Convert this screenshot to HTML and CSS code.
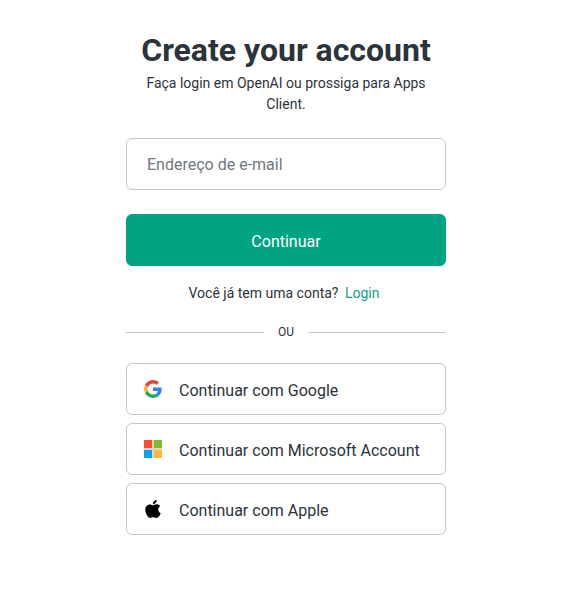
FILE: index.html
```html
<!DOCTYPE html>
<html lang="pt-BR">
<head>
<meta charset="utf-8">
<meta name="viewport" content="width=device-width, initial-scale=1">
<title>Create your account</title>
<link rel="stylesheet" href="styles.css">
</head>
<body>
<main class="signup">
  <header class="intro">
    <h1 class="title">Create your account</h1>
    <p class="subtitle">Faça login em OpenAI ou prossiga para Apps Client.</p>
  </header>
  <form class="email-form">
    <input class="email-input" type="email" placeholder="Endereço de e-mail" aria-label="Endereço de e-mail">
    <button class="submit" type="submit">Continuar</button>
  </form>
  <p class="login-prompt">Você já tem uma conta? <a class="login-link" href="#">Login</a></p>
  <div class="divider"><span>OU</span></div>
  <div class="providers">
    <button class="provider" type="button">
      <svg class="icon" viewBox="0 0 48 48" aria-hidden="true">
        <path fill="#EA4335" d="M24 9.5c3.54 0 6.71 1.22 9.21 3.6l6.85-6.85C35.9 2.38 30.47 0 24 0 14.62 0 6.51 5.38 2.56 13.22l7.98 6.19C12.43 13.72 17.74 9.5 24 9.5z"/>
        <path fill="#2f85ee" d="M46.98 24.55c0-1.57-.15-3.09-.38-4.55H24v9.02h12.94c-.58 2.96-2.26 5.48-4.78 7.18l7.73 6c4.51-4.18 7.09-10.36 7.09-17.65z"/>
        <path fill="#FBB92c" d="M10.53 28.59c-.48-1.45-.76-2.99-.76-4.59s.27-3.14.76-4.59l-7.98-6.19C.92 16.46 0 20.12 0 24c0 3.88.92 7.54 2.56 10.78l7.97-6.19z"/>
        <path fill="#25a958" d="M24 48c6.48 0 11.93-2.13 15.89-5.81l-7.73-6c-2.15 1.45-4.92 2.3-8.16 2.3-6.26 0-11.57-4.22-13.47-9.91l-7.98 6.19C6.51 42.62 14.62 48 24 48z"/>
      </svg>
      <span class="provider-name">Continuar com Google</span>
    </button>
    <button class="provider" type="button">
      <svg class="icon" viewBox="0 0 18 18" aria-hidden="true">
        <path fill="#e3d6c8" d="M0 0h18v18H0z"/>
        <path fill="#ff4b2c" d="M0 0h8v8H0z"/>
        <path fill="#80bb30" d="M10 0h8v8h-8z"/>
        <path fill="#00a4ef" d="M0 10h8v8H0z"/>
        <path fill="#ffb735" d="M10 10h8v8h-8z"/>
      </svg>
      <span class="provider-name">Continuar com Microsoft Account</span>
    </button>
    <button class="provider" type="button">
      <svg class="icon" viewBox="0 0 814 1000" aria-hidden="true">
        <path d="M788.100 340.900c-5.800 4.500-108.200 62.200-108.200 190.500 0 148.400 130.300 200.900 134.200 202.200-.6 3.200-20.700 71.900-68.700 141.900-42.800 61.600-87.500 123.100-155.500 123.100s-85.500-39.500-164-39.500c-76.500 0-103.700 40.800-165.900 40.800s-105.600-57-155.500-127C46.700 790.700 0 663 0 541.800c0-194.400 126.400-297.500 250.800-297.500 66.100 0 121.200 43.400 162.700 43.400 39.500 0 101.100-46 176.300-46 28.500 0 130.900 2.600 198.300 99.200zM554.100 159.400c31.100-36.900 53.100-88.100 53.100-139.300 0-7.100-.6-14.300-1.900-20.100-50.600 1.900-110.800 33.700-147.100 75.800-28.500 32.400-55.100 83.600-55.100 135.500 0 7.800 1.300 15.600 1.900 18.100 3.200.6 8.400 1.300 13.600 1.300 45.400 0 102.500-30.400 135.500-71.300z" transform="translate(-20 0) scale(1.05 1)"/>
      </svg>
      <span class="provider-name">Continuar com Apple</span>
    </button>
  </div>
</main>
</body>
</html>
```
FILE: styles.css
```css
* {
  box-sizing: border-box;
}

body {
  margin: 0;
  background: #fff;
  color: #2d333a;
  font-family: Roboto, "Liberation Sans", sans-serif;
}

.signup {
  width: 100%;
  max-width: 320px;
  margin: 0 auto;
  padding: 32px 0;
}

.intro {
  text-align: center;
}

.title {
  margin: 0 0 5px;
  font-size: 32px;
  line-height: 36px;
  font-weight: 700;
  white-space: nowrap;
}

.subtitle {
  margin: 0;
  padding: 0 16px;
  font-size: 14px;
  line-height: 21px;
}

.email-form {
  display: grid;
  gap: 24px;
  margin-top: 23px;
}

.email-input,
.submit,
.provider {
  width: 100%;
  height: 52px;
  border: 1px solid #c2c8d0;
  border-radius: 6px;
  background: #fff;
  color: #2d333a;
  font-family: inherit;
  font-size: 16px;
}

.email-input {
  padding: 0 20px;
}

.email-input::placeholder {
  color: #6f7780;
  opacity: 1;
}

.submit {
  padding: 2px 0 0;
  border-color: #00a480;
  background: #00a480;
  color: #fff;
}

.login-prompt {
  margin: 16px 0;
  font-size: 14px;
  line-height: 22px;
  text-align: center;
}

.login-link {
  margin: 0 4px 0 3px;
  color: #10a37f;
  text-decoration: none;
}

.divider {
  display: flex;
  align-items: center;
  gap: 14px;
  margin: 20px 0 22px;
  font-size: 12px;
  line-height: 17px;
}

.divider::before,
.divider::after {
  content: "";
  flex: 1;
  height: 1px;
  background: #c2c8d0;
}

.providers {
  display: grid;
  gap: 8px;
}

.provider {
  display: flex;
  align-items: center;
  gap: 16px;
  padding: 0 16px;
  text-align: left;
}

.provider-name {
  padding-top: 2px;
}

.icon {
  width: 20px;
  height: 18px;
}
```
